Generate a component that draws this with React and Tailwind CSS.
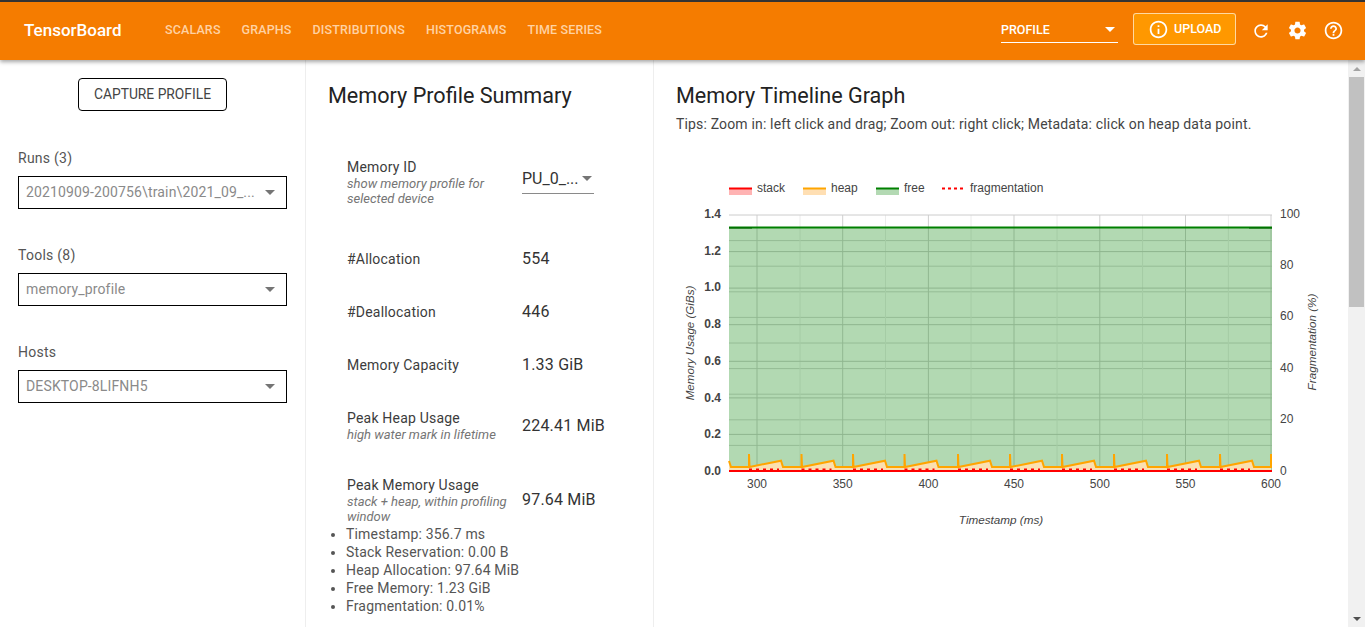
const roboto = 'font-["Roboto",sans-serif]';

const tabs = ['SCALARS', 'GRAPHS', 'DISTRIBUTIONS', 'HISTOGRAMS', 'TIME SERIES'];

function Caret({ className }) {
  return <span className={`w-0 h-0 border-x-[5px] border-x-transparent border-t-[5px] ${className}`} />;
}

function Icon({ d, className }) {
  return (
    <svg viewBox="0 0 24 24" fill="currentColor" className={className}>
      <path d={d} />
    </svg>
  );
}

function Header() {
  return (
    <header className="relative z-10 h-[60px] shrink-0 bg-[#f57c00] border-t-2 border-[#333333] shadow-[0_2px_4px_rgba(0,0,0,0.35)] flex items-center text-white">
      <div className="ml-6 w-[141px] text-[17px] font-medium -mt-px">TensorBoard</div>
      <nav className="flex gap-[21px] text-[12.5px] tracking-[0.14px] font-medium text-[#ffd2a3] -mt-px">
        {tabs.map((t) => (
          <span key={t}>{t}</span>
        ))}
      </nav>

      {/* Right side controls */}
      <div className="ml-auto flex items-center -mt-px">
        <div className="w-[117px] h-[26px] border-b border-white flex items-center justify-between pr-[3px] text-[12.5px] font-medium -mt-[2px]">
          <span className="mt-[2px]">PROFILE</span>
          <Caret className="border-t-white" />
        </div>
        <div className="ml-[15px] w-[103px] h-[32px] bg-[#ff9800] border border-[#ffffffa0] rounded-[3px] flex items-center pl-[14px] gap-[5px] text-[12.5px] font-medium -mt-[4px]">
          <Icon className="w-[21px] h-[21px] mt-[2px]" d="M11 17h2v-6h-2v6zm1-15C6.48 2 2 6.48 2 12s4.48 10 10 10 10-4.48 10-10S17.52 2 12 2zm0 18c-4.41 0-8-3.59-8-8s3.59-8 8-8 8 3.59 8 8-3.59 8-8 8zM11 9h2V7h-2v2z" />
          <span className="mt-[1px]">UPLOAD</span>
        </div>
        <Icon className="ml-[15px] w-[20px] h-[20px]" d="M17.65 6.35C16.2 4.9 14.21 4 12 4c-4.42 0-7.99 3.58-7.99 8s3.57 8 7.99 8c3.73 0 6.84-2.55 7.73-6h-2.08c-.82 2.33-3.04 4-5.65 4-3.31 0-6-2.69-6-6s2.69-6 6-6c1.66 0 3.14.69 4.22 1.78L13 11h7V4l-2.35 2.35z" />
        <Icon className="ml-[16px] w-[21px] h-[21px]" d="M19.43 12.98c.04-.32.07-.64.07-.98s-.03-.66-.07-.98l2.11-1.65c.19-.15.24-.42.12-.64l-2-3.46c-.12-.22-.39-.3-.61-.22l-2.49 1c-.52-.4-1.08-.73-1.69-.98l-.38-2.65C14.46 2.18 14.25 2 14 2h-4c-.25 0-.46.18-.49.42l-.38 2.65c-.61.25-1.17.59-1.69.98l-2.49-1c-.23-.09-.49 0-.61.22l-2 3.46c-.13.22-.07.49.12.64l2.11 1.65c-.04.32-.07.65-.07.98s.03.66.07.98l-2.11 1.65c-.19.15-.24.42-.12.64l2 3.46c.12.22.39.3.61.22l2.49-1c.52.4 1.08.73 1.69.98l.38 2.65c.03.24.24.42.49.42h4c.25 0 .46-.18.49-.42l.38-2.65c.61-.25 1.17-.59 1.69-.98l2.49 1c.23.09.49 0 .61-.22l2-3.46c.12-.22.07-.49-.12-.64l-2.11-1.65zM12 15.5c-1.93 0-3.5-1.57-3.5-3.5s1.57-3.5 3.5-3.5 3.5 1.57 3.5 3.5-1.57 3.5-3.5 3.5z" />
        <Icon className="ml-[15px] mr-[21px] w-[21px] h-[21px]" d="M11 18h2v-2h-2v2zm1-16C6.48 2 2 6.48 2 12s4.48 10 10 10 10-4.48 10-10S17.52 2 12 2zm0 18c-4.41 0-8-3.59-8-8s3.59-8 8-8 8 3.59 8 8-3.59 8-8 8zm0-14c-2.21 0-4 1.79-4 4h2c0-1.1.9-2 2-2s2 .9 2 2c0 2-3 1.75-3 5h2c0-2.25 3-2.5 3-5 0-2.21-1.79-4-4-4z" />
      </div>
    </header>
  );
}

function SideSelect({ label, value, className }) {
  return (
    <div className={className}>
      <div className="h-[18px] leading-[18px] text-[14px] tracking-[0.25px] text-[#555555]">{label}</div>
      <div className="mt-[9px] w-[269px] h-[33px] border border-black flex items-center justify-between pl-[7px] pr-[11px]">
        <span className="text-[14px] tracking-[0.14px] text-[#8a8a8a]">{value}</span>
        <Caret className="border-t-[#757575]" />
      </div>
    </div>
  );
}

function Sidebar() {
  return (
    <aside className="w-[306px] shrink-0 border-r border-[#eeeeee] pl-[18px]">
      <div className="mt-[18px] ml-[60px] w-[149px] h-[33px] border border-black rounded-[4px] flex items-center justify-center text-[13.8px] text-[#444444]">
        CAPTURE PROFILE
      </div>
      <SideSelect className="mt-[38px]" label="Runs (3)" value="20210909-200756\train\2021_09_..." />
      <SideSelect className="mt-[37px]" label="Tools (8)" value="memory_profile" />
      <SideSelect className="mt-[37px]" label="Hosts" value="DESKTOP-8LIFNH5" />
    </aside>
  );
}

function Row({ label, sub, value, className }) {
  return (
    <div className={`flex items-center ${className}`}>
      <div className="w-[175px] shrink-0 pr-[12px]">
        <div className="h-[18px] leading-[18px] text-[14px] tracking-[0.2px] text-[#3c3c3c]">{label}</div>
        {sub && <div className="text-[13px] leading-[15px] italic text-[#757575]">{sub}</div>}
      </div>
      <div className="text-[16px] tracking-[0.2px] text-[#333333] leading-[18px]">{value}</div>
    </div>
  );
}

function Summary() {
  const stats = [
    'Timestamp: 356.7 ms',
    'Stack Reservation: 0.00 B',
    'Heap Allocation: 97.64 MiB',
    'Free Memory: 1.23 GiB',
    'Fragmentation: 0.01%',
  ];
  return (
    <section className="w-[348px] shrink-0 border-r border-[#eeeeee] pl-[22px]">
      <h2 className="mt-[21px] h-[30px] leading-[30px] text-[21.6px] text-[#222222]">Memory Profile Summary</h2>
      <div className="pl-[19px]">
        <div className="flex mt-[47px]">
          <div className="w-[175px] shrink-0 pr-[12px]">
            <div className="h-[18px] leading-[18px] text-[14px] tracking-[0.2px] text-[#3c3c3c]">Memory ID</div>
            <div className="text-[13px] leading-[15px] italic text-[#757575]">show memory profile for selected device</div>
          </div>
          <div className="mt-[8px] w-[72px] h-[28px] border-b border-[#8a8a8a] flex items-start justify-between pr-[2px] text-[16px] text-[#333333] leading-[26px]">
            <span>PU_0_...</span>
            <Caret className="mt-[10px] border-t-[#757575]" />
          </div>
        </div>
        <Row className="mt-[44px]" label="#Allocation" value="554" />
        <Row className="mt-[35px]" label="#Deallocation" value="446" />
        <Row className="mt-[35px]" label="Memory Capacity" value="1.33 GiB" />
        <Row className="mt-[35px]" label="Peak Heap Usage" sub="high water mark in lifetime" value="224.41 MiB" />
        <Row className="mt-[34px]" label="Peak Memory Usage" sub="stack + heap, within profiling window" value="97.64 MiB" />
      </div>
      <ul className="list-disc pl-[18px] mt-px text-[14px] tracking-[0.17px] leading-[18px] text-[#555555]">
        {stats.map((s) => (
          <li key={s}>{s}</li>
        ))}
      </ul>
    </section>
  );
}

const spikes = [749, 801.5, 853, 904.5, 958, 1010, 1062, 1114, 1167, 1220];

function heapPath() {
  let d = 'M729 460 L731 466';
  spikes.forEach((x) => {
    d += ` L${x} 466 L${x} 453 L${x + 0.5} 466 L${x + 32} 459.7 L${x + 34} 466`;
  });
  return d + ' L1271 466 L1271 453';
}

function Chart() {
  const major = [214, 250.6, 287.1, 323.7, 360.3, 396.9, 433.4];
  const secondary = [239.6, 265.2, 290.8, 316.4, 342, 367.6, 393.2, 418.8, 444.4];
  const xMajor = [757, 842.7, 928.4, 1014, 1099.8, 1185.5, 1271];
  const xMinor = [800, 885.5, 971, 1057, 1142.6, 1228.4];
  const yLabels = ['1.4', '1.2', '1.0', '0.8', '0.6', '0.4', '0.2', '0.0'];
  const rLabels = [[100, 217], [80, 268], [60, 319], [40, 370.5], [20, 422], [0, 474]];
  const xLabels = [300, 350, 400, 450, 500, 550, 600];
  const heap = heapPath();

  return (
    <svg viewBox="676 170 672 370" className="block w-[672px] h-[370px] mt-[37px]" fontFamily="'Liberation Sans', sans-serif" fontSize="12" fill="#444444">
      {/* Legend */}
      <rect x="729" y="188" width="23" height="6" fill="#ffb3b3" />
      <line x1="729" x2="752" y1="187.5" y2="187.5" stroke="#ff0000" strokeWidth="2" />
      <text x="757" y="191">stack</text>
      <rect x="803" y="188" width="23" height="6" fill="#ffdfb3" />
      <line x1="803" x2="826" y1="187.5" y2="187.5" stroke="#ffa500" strokeWidth="2" />
      <text x="831" y="191">heap</text>
      <rect x="876" y="188" width="23" height="6" fill="#b3d9b3" />
      <line x1="876" x2="899" y1="187.5" y2="187.5" stroke="#008000" strokeWidth="2" />
      <text x="904" y="191">free</text>
      <line x1="942" x2="966" y1="187.5" y2="187.5" stroke="#ff0000" strokeWidth="2" strokeDasharray="3 3" />
      <text x="970" y="191">fragmentation</text>

      {/* Grid */}
      {secondary.map((y) => (
        <line key={y} x1="729" x2="1272" y1={y} y2={y} stroke="#d6d6d6" />
      ))}
      {xMinor.map((x) => (
        <line key={x} x1={x} x2={x} y1="214" y2="470" stroke="#ececec" />
      ))}
      {xMajor.map((x) => (
        <line key={x} x1={x} x2={x} y1="214" y2="470" stroke="#cfcfcf" />
      ))}
      {major.map((y) => (
        <line key={y} x1="729" x2="1272" y1={y} y2={y} stroke="#cccccc" />
      ))}

      {/* Series */}
      <rect x="729" y="226.5" width="543" height="243.5" fill="#008000" fillOpacity="0.3" />
      <path d={`${heap} L1271 470 L729 470 Z`} fill="#ffe0b0" fillOpacity="0.95" />
      <path d={heap} fill="none" stroke="#ffa500" strokeWidth="2" />
      <line x1="729" x2="1272" y1="226.5" y2="226.5" stroke="#008000" strokeWidth="2" />
      <line x1="729" x2="752" y1="227" y2="227" stroke="#006400" strokeWidth="1" />
      <line x1="1249" x2="1272" y1="227" y2="227" stroke="#006400" strokeWidth="1" />
      {spikes.map((x) => (
        <line key={x} x1={x} x2={x + 30} y1="468.5" y2="468.5" stroke="#ff0000" strokeWidth="2" strokeDasharray="3 4" />
      ))}
      <line x1="729" x2="1272" y1="470" y2="470" stroke="#ff0000" strokeWidth="2" />

      {/* Axes */}
      {yLabels.map((t, i) => (
        <text key={t} x="721" y={217 + i * 36.7} textAnchor="end" fontWeight="700">{t}</text>
      ))}
      {rLabels.map(([t, y]) => (
        <text key={t} x="1280" y={y}>{t}</text>
      ))}
      {xLabels.map((t, i) => (
        <text key={t} x={xMajor[i]} y="487" textAnchor="middle">{t}</text>
      ))}
      <text x="1001" y="523" textAnchor="middle" fontStyle="italic" fontSize="11.7">Timestamp (ms)</text>
      <text transform="translate(694 342) rotate(-90)" textAnchor="middle" fontStyle="italic" fontSize="11.6">Memory Usage (GiBs)</text>
      <text transform="translate(1316 341) rotate(-90)" textAnchor="middle" fontStyle="italic" fontSize="11.7">Fragmentation (%)</text>
    </svg>
  );
}

function Timeline() {
  return (
    <section className="flex-1 min-w-0 pl-[22px]">
      <h2 className="mt-[21px] h-[30px] leading-[30px] text-[21.6px] text-[#222222]">Memory Timeline Graph</h2>
      <p className="mt-[3px] h-[20px] leading-[20px] text-[14px] tracking-[0.16px] text-[#444444]">
        Tips: Zoom in: left click and drag; Zoom out: right click; Metadata: click on heap data point.
      </p>
    </section>
  );
}

function Scrollbar() {
  return (
    <div className="w-[17px] shrink-0 bg-[#f1f1f1] flex flex-col items-center">
      <div className="h-[17px] flex items-center justify-center">
        <span className="w-0 h-0 border-x-[4px] border-x-transparent border-b-[4px] border-b-[#a3a3a3]" />
      </div>
      <div className="w-[15px] h-[230px] bg-[#c1c1c1]" />
      <div className="mt-auto h-[17px] flex items-center justify-center">
        <span className="w-0 h-0 border-x-[4px] border-x-transparent border-t-[4px] border-t-[#505050]" />
      </div>
    </div>
  );
}

export default function App() {
  return (
    <div className={`h-screen flex flex-col overflow-hidden bg-white ${roboto}`}>
      <Header />
      <div className="flex flex-1 min-h-0 overflow-hidden">
        <Sidebar />
        <Summary />
        <section className="flex-1 min-w-0 overflow-hidden">
          <div className="flex flex-col">
            <Timeline />
            <div className="pl-[22px]">
              <Chart />
            </div>
          </div>
        </section>
        <Scrollbar />
      </div>
    </div>
  );
}
